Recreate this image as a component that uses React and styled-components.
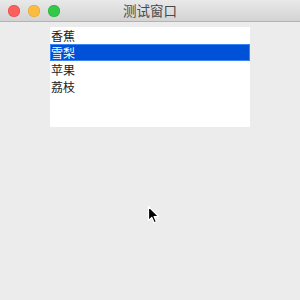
import styled, { createGlobalStyle } from "styled-components";

const Global = createGlobalStyle`
  html, body {
    margin: 0;
    padding: 0;
    background: #ececec;
  }
  body {
    font-family: "Noto Sans CJK SC", "Liberation Sans", sans-serif;
  }
`;

const Window = styled.div`
  width: 300px;
  height: 300px;
  background: #ececec;
  display: flex;
  flex-direction: column;
  position: relative;
  overflow: hidden;
`;

const TitleBar = styled.div`
  height: 21px;
  flex: none;
  display: flex;
  align-items: center;
  position: relative;
  background: linear-gradient(#e9e9e9, #d3d3d3);
  border-bottom: 1px solid #b3b3b3;
`;

const Lights = styled.div`
  display: flex;
  gap: 8px;
  padding-left: 8px;
`;

const Light = styled.span`
  width: 12px;
  height: 12px;
  border-radius: 50%;
  background: ${(p) => p.$color};
  box-shadow: inset 0 0 0 0.5px ${(p) => p.$edge};
`;

const Title = styled.div`
  position: absolute;
  left: 0;
  right: 0;
  text-align: center;
  font-size: 13.5px;
  color: #4a4a4a;
  line-height: 21px;
  pointer-events: none;
`;

const Body = styled.div`
  flex: 1;
  padding: 5px 0 0 50px;
`;

const List = styled.ul`
  list-style: none;
  margin: 0;
  padding: 0;
  width: 200px;
  height: 100px;
  background: #ffffff;
`;

const Item = styled.li`
  height: 17px;
  box-sizing: border-box;
  padding-left: 0;
  font-size: 12px;
  line-height: 15px;
  color: ${(p) => (p.$selected ? "#ffffff" : "#222222")};
  background: ${(p) => (p.$selected ? "#0050d8" : "transparent")};
  border: 1px solid ${(p) => (p.$selected ? "#3b86f5" : "transparent")};
`;

const Cursor = styled.svg`
  position: absolute;
  left: 147px;
  top: 205px;
`;

const fruits = ["香蕉", "雪梨", "苹果", "荔枝"];

export default function App() {
  return (
    <Window>
      <Global />
      <TitleBar>
        <Lights>
          <Light $color="#fc605c" $edge="#de4a45" />
          <Light $color="#fdbc40" $edge="#de9f34" />
          <Light $color="#34c84a" $edge="#27aa35" />
        </Lights>
        <Title>测试窗口</Title>
      </TitleBar>
      <Body>
        <List>
          {fruits.map((f, i) => (
            <Item key={f} $selected={i === 1}>
              {f}
            </Item>
          ))}
        </List>
      </Body>
      <Cursor width="14" height="20" viewBox="0 0 14 20">
        <path
          d="M1.5 1.5 L1.5 15.5 L4.8 12.4 L7.2 17.8 L9.4 16.8 L7.1 11.6 L11.6 11.6 Z"
          fill="#000"
          stroke="#fff"
          strokeWidth="1.2"
          strokeLinejoin="round"
        />
      </Cursor>
    </Window>
  );
}
